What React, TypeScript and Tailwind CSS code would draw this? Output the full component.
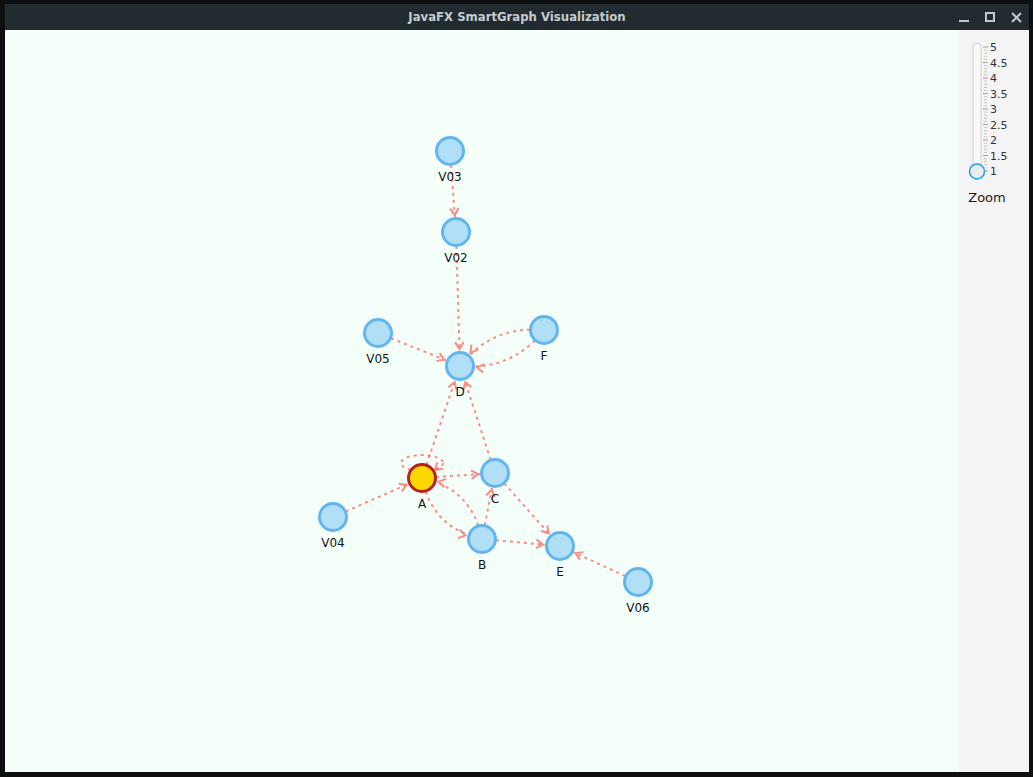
import React from 'react';

type Pt = { x: number; y: number };

const nodes: Record<string, Pt> = {
  V03: { x: 450, y: 151 },
  V02: { x: 456, y: 232 },
  V05: { x: 378, y: 333 },
  F: { x: 544, y: 330 },
  D: { x: 460, y: 366 },
  A: { x: 422, y: 478 },
  C: { x: 495, y: 473 },
  V04: { x: 333, y: 517 },
  B: { x: 482, y: 539 },
  E: { x: 560, y: 546 },
  V06: { x: 638, y: 582 },
};

// from, to, bend (perpendicular offset of control point, 0 = straight)
const edges: [string, string, number][] = [
  ['V03', 'V02', 0],
  ['V02', 'D', 0],
  ['V05', 'D', 0],
  ['F', 'D', 25],
  ['F', 'D', -25],
  ['A', 'D', 0],
  ['C', 'D', 0],
  ['A', 'C', 0],
  ['A', 'B', 28],
  ['B', 'A', 28],
  ['B', 'C', 0],
  ['V04', 'A', 0],
  ['C', 'E', 0],
  ['B', 'E', 0],
  ['V06', 'E', 0],
];

const EDGE = '#FF6D66';
const R = 17;

const arrowPath = (tip: Pt, from: Pt) => {
  const dx = from.x - tip.x;
  const dy = from.y - tip.y;
  const len = Math.hypot(dx, dy) || 1;
  const ux = dx / len;
  const uy = dy / len;
  const a = (32 * Math.PI) / 180;
  const l = 8;
  const r1 = { x: tip.x + l * (ux * Math.cos(a) - uy * Math.sin(a)), y: tip.y + l * (ux * Math.sin(a) + uy * Math.cos(a)) };
  const r2 = { x: tip.x + l * (ux * Math.cos(-a) - uy * Math.sin(-a)), y: tip.y + l * (ux * Math.sin(-a) + uy * Math.cos(-a)) };
  return `M${r1.x} ${r1.y} L${tip.x} ${tip.y} L${r2.x} ${r2.y}`;
};

const Edge = ({ from, to, bend }: { from: string; to: string; bend: number }) => {
  const a = nodes[from];
  const b = nodes[to];
  const mx = (a.x + b.x) / 2;
  const my = (a.y + b.y) / 2;
  const dx = b.x - a.x;
  const dy = b.y - a.y;
  const len = Math.hypot(dx, dy);
  const px = -dy / len;
  const py = dx / len;
  const ctrl = { x: mx + px * bend, y: my + py * bend };
  const dir = bend === 0 ? a : ctrl;
  const ddx = b.x - dir.x;
  const ddy = b.y - dir.y;
  const dl = Math.hypot(ddx, ddy);
  const tip = { x: b.x - (ddx / dl) * R, y: b.y - (ddy / dl) * R };
  const d = bend === 0 ? `M${a.x} ${a.y} L${b.x} ${b.y}` : `M${a.x} ${a.y} Q${ctrl.x} ${ctrl.y} ${b.x} ${b.y}`;
  return (
    <g opacity={0.8}>
      <path d={d} fill="none" stroke={EDGE} strokeWidth={2} strokeDasharray="3 4" />
      <path d={arrowPath(tip, dir)} fill="none" stroke={EDGE} strokeWidth={2} />
    </g>
  );
};

const Node = ({ id }: { id: string }) => {
  const p = nodes[id];
  const special = id === 'A';
  return (
    <g>
      <circle cx={p.x} cy={p.y} r={13.5} fill={special ? '#FFD700' : '#B1DFF7'} stroke={special ? '#B22222' : '#61B5F1'} strokeWidth={3} />
      <text x={p.x} y={p.y + 30} textAnchor="middle" fontSize={12} fill="#111" style={{ fontFamily: '"DejaVu Sans", sans-serif' }}>
        {id}
      </text>
    </g>
  );
};

const ticks = [5, 4.5, 4, 3.5, 3, 2.5, 2, 1.5, 1];

const ZoomSlider = () => {
  const top = 47;
  const step = 15.5;
  const minor: number[] = [];
  for (let i = 0; i < 8; i++) for (let j = 1; j < 5; j++) minor.push(top + i * step + (j * step) / 5);
  return (
    <svg width={70} height={180} viewBox="959 30 70 180" className="block">
      <rect x={973} y={43} width={8} height={134} rx={4} fill="#fafafa" stroke="#cfcfcf" />
      {minor.map((y) => (
        <line key={y} x1={984} x2={987} y1={y} y2={y} stroke="#c4c4c4" strokeWidth={1} />
      ))}
      {ticks.map((t, i) => (
        <g key={t}>
          <line x1={983} x2={988} y1={top + i * step} y2={top + i * step} stroke="#a0a0a0" strokeWidth={1} />
          <text x={990} y={top + i * step + 4} fontSize={11} fill="#333" style={{ fontFamily: '"DejaVu Sans", sans-serif' }}>
            {t}
          </text>
        </g>
      ))}
      <circle cx={977} cy={171.5} r={7.5} fill="#e9ebec" stroke="#1ba1e2" strokeWidth={1.5} />
      <text x={987} y={202} textAnchor="middle" fontSize={13} fill="#1a1a1a" style={{ fontFamily: '"DejaVu Sans", sans-serif' }}>
        Zoom
      </text>
    </svg>
  );
};

export default function App() {
  return (
    <div className="h-[777px] w-[1033px] bg-[#0d0f11] pt-[4px] pr-[4px] pb-[5px] pl-[5px]">
      <div className="flex h-full w-full flex-col">
        <div className="relative flex h-[26px] items-center justify-center bg-[#222b30]">
          <span
            className="text-[13px] font-bold text-[#c5cbd0] font-stretch-condensed"
            style={{ fontFamily: '"DejaVu Sans Condensed", "DejaVu Sans", sans-serif' }}
          >
            JavaFX SmartGraph Visualization
          </span>
          <div className="absolute right-[7px] top-0 flex h-full items-center gap-[16px]">
            <svg width={10} height={10} viewBox="0 0 10 10">
              <rect x={0} y={8} width={10} height={2} fill="#c0c8cf" />
            </svg>
            <svg width={10} height={10} viewBox="0 0 10 10">
              <rect x={1} y={1} width={8} height={8} fill="none" stroke="#c0c8cf" strokeWidth={2} />
            </svg>
            <svg width={11} height={11} viewBox="0 0 11 11">
              <path d="M1 1 L10 10 M10 1 L1 10" stroke="#c0c8cf" strokeWidth={2} />
            </svg>
          </div>
        </div>
        <div className="flex flex-1">
          <div className="relative flex-1 overflow-hidden bg-[#f5fffa]">
            <svg width={954} height={742} viewBox="5 30 954 742" className="absolute left-0 top-0">
              <ellipse cx={422} cy={463} rx={21} ry={8} fill="none" stroke={EDGE} strokeWidth={2} strokeDasharray="3 4" opacity={0.8} />
              <path d={arrowPath({ x: 435, y: 470 }, { x: 444, y: 462 })} fill="none" stroke={EDGE} strokeWidth={2} opacity={0.8} />
              {edges.map(([f, t, b], i) => (
                <Edge key={i} from={f} to={t} bend={b} />
              ))}
              {Object.keys(nodes).map((id) => (
                <Node key={id} id={id} />
              ))}
            </svg>
          </div>
          <div className="w-[70px] bg-[#f4f4f4]">
            <ZoomSlider />
          </div>
        </div>
      </div>
    </div>
  );
}
